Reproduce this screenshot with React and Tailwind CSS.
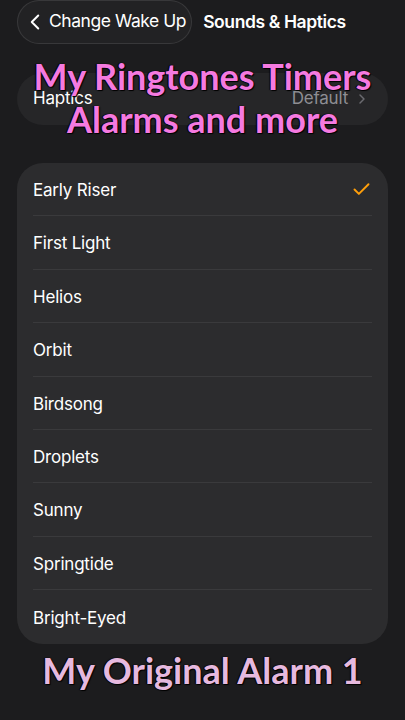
import { ChevronLeft, ChevronRight, Check } from "lucide-react";

const SOUNDS = [
  "Early Riser",
  "First Light",
  "Helios",
  "Orbit",
  "Birdsong",
  "Droplets",
  "Sunny",
  "Springtide",
  "Bright-Eyed",
];

const overlayShadow = {
  textShadow: "0 0 1px #000, 1px 1px 1px #000, -1px 0 1px #000",
};

export default function App() {
  return (
    <div
      className="relative w-[405px] h-[720px] overflow-hidden bg-[#1c1c1e] text-white"
      style={{ fontFamily: "Inter, 'Noto Sans', sans-serif" }}
    >
      {/* nav bar */}
      <div className="flex items-center gap-[11px] pl-[17px] h-[44px]">
        <div className="flex items-center h-[44px] -mt-[1px] pl-[4px] pr-[5px] rounded-full border border-white/10 bg-[#222224]">
          <ChevronLeft size={26} strokeWidth={1.8} className="text-white" />
          <span className="text-[17.5px] ml-[1px] tracking-[-0.45px]">Change Wake Up</span>
        </div>
        <span className="text-[17.5px] font-semibold tracking-[-0.4px]">Sounds &amp; Haptics</span>
      </div>

      {/* haptics row */}
      <div className="mx-[17px] mt-[29px] h-[52px] rounded-full bg-[#262628] flex items-center justify-between pl-[16px] pr-[18px]">
        <span className="text-[17px] tracking-[-0.2px]">Haptics</span>
        <div className="flex items-center gap-[6px] text-[#8e8e93]">
          <span className="text-[17px] tracking-[-0.2px]">Default</span>
          <ChevronRight size={16} strokeWidth={2.2} className="text-[#6b6b70]" />
        </div>
      </div>

      {/* sound list */}
      <div className="mx-[17px] mt-[38px] rounded-[26px] bg-[#2c2c2e] overflow-hidden">
        {SOUNDS.map((name, i) => (
          <div key={name} className="pl-[16px]">
            <div
              className={
                "h-[53.4px] flex items-center justify-between pt-[3px] mr-[16px] " +
                (i < SOUNDS.length - 1 ? "border-b border-[#3a3a3c]" : "")
              }
            >
              <span className="text-[17px] tracking-[-0.2px]">{name}</span>
              {i === 0 && <Check size={21} strokeWidth={2.2} className="text-[#ff9f0a] -mt-[2px]" />}
            </div>
          </div>
        ))}
      </div>

      {/* overlay captions */}
      <div
        className="absolute left-0 right-0 top-[55px] flex flex-col items-center text-[#f57ae0] font-bold text-[36px] leading-[43px]"
        style={{ fontFamily: "Lato, 'Open Sans', sans-serif", ...overlayShadow }}
      >
        <span>My Ringtones Timers</span>
        <span>Alarms and more</span>
      </div>

      <div
        className="absolute left-0 right-0 top-[648px] text-center text-[#e6b9df] font-bold text-[36px] leading-[44px]"
        style={{ fontFamily: "Lato, 'Open Sans', sans-serif", ...overlayShadow }}
      >
        My Original Alarm 1
      </div>
    </div>
  );
}
